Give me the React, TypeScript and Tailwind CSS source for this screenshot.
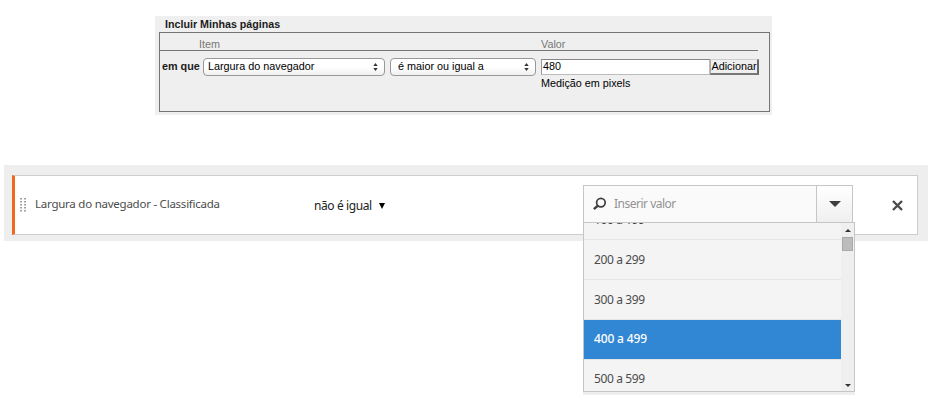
import React from "react";

const options = ["100 a 199", "200 a 299", "300 a 399", "400 a 499", "500 a 599"];

const optionBase = "h-[40px] border-b border-[#e4e4e4] pl-[10px] text-[12px]";

function optionClass(option: string, index: number) {
  if (option === "400 a 499") {
    return `${optionBase} bg-[#3187d3] leading-[38px] font-medium tracking-[-0.15px] text-white`;
  }
  if (index === 0) {
    return `${optionBase} leading-[40px] tracking-[-0.37px] text-[#444]`;
  }
  if (index === options.length - 1) {
    return `${optionBase} leading-[38px] tracking-[-0.37px] text-[#4c4c4c]`;
  }
  return `${optionBase} leading-[39px] tracking-[-0.37px] text-[#4c4c4c]`;
}

function Stepper() {
  return (
    <svg width="5" height="8" viewBox="0 0 5 8" className="fill-[#333]">
      <path d="M2.5 0 4.7 3H.3zM2.5 8 .3 5h4.4z" />
    </svg>
  );
}

function NativeSelect({ label, className }: { label: string; className: string }) {
  return (
    <div
      className={`flex h-[18px] shrink-0 items-center justify-between rounded-[4px] border border-[#989898] bg-linear-to-b from-white from-50% to-[#f0f0f0] pr-[6px] text-black ${className}`}
    >
      <span className="pb-[2px] text-[10.8px] leading-[14px] whitespace-nowrap">{label}</span>
      <Stepper />
    </div>
  );
}

function SegmentPanel() {
  return (
    <section className="ml-[155px] h-[99px] w-[617px] bg-[#efefef] px-[4px] pt-px font-['Liberation_Sans',Arial,sans-serif] text-[11px] text-black">
      <h2 className="h-[15px] pl-[6px] text-[10.7px] leading-[15px] font-bold text-[#1c1c1c]">Incluir Minhas páginas</h2>
      <div className="h-[80px] w-[611px] border border-[#757575]">
        <div className="flex h-[18px] w-[598px] border-b border-[#757575] pt-[4px] text-[10.8px] leading-[14px] text-[#777]">
          <span className="w-[342px] pl-[39px]">Item</span>
          <span className="pl-[39px]">Valor</span>
        </div>
        <div className="flex items-start pt-[7px] pl-[2px]">
          <span className="w-[41px] shrink-0 text-[10.8px] leading-[17px] font-bold whitespace-nowrap text-[#1c1c1c]">em que</span>
          <NativeSelect label="Largura do navegador" className="w-[182px] pl-[4px]" />
          <NativeSelect label="é maior ou igual a" className="ml-[5px] w-[146px] pl-[7px]" />
          <div className="ml-[5px]">
            <div className="mt-px flex">
              <div className="h-[16px] w-[169px] border border-t-[#858585] border-r-[#bbb] border-b-[#bbb] border-l-[#999] bg-white pl-px text-[10.8px] leading-[13px]">480</div>
              <div className="h-[16px] w-[49px] border-t border-r-2 border-b-2 border-l border-t-[#ccc] border-r-[#6a6a6a] border-b-[#777] border-l-[#aaa] text-center text-[10.8px] leading-[13px]">Adicionar</div>
            </div>
            <p className="pt-px text-[10.8px] leading-[14px]">Medição em pixels</p>
          </div>
        </div>
      </div>
    </section>
  );
}

function DragHandle() {
  return (
    <svg width="6" height="14" viewBox="0 0 6 14" className="fill-[#a0a0a0]">
      {[0, 3, 6, 9, 12].map((y) => (
        <path key={y} d={`M0 ${y}h2v1.5h-2zM4 ${y}h2v1.5h-2z`} />
      ))}
    </svg>
  );
}

function OptionsMenu() {
  return (
    <div className="absolute top-[37px] left-0 flex h-[170px] w-[272px] border border-[#c6c6c6] bg-[#f4f4f4] shadow-[0_3px_0_#eee]">
      <div className="h-full w-[257px] overflow-hidden">
        <div className="-mt-[23px]">
          {options.map((option, index) => (
            <div key={option} className={optionClass(option, index)}>
              {option}
            </div>
          ))}
        </div>
      </div>
      <div className="flex w-[13px] flex-col items-center bg-[#efefef] pt-[6px] pb-[4px]">
        <svg width="6" height="3" viewBox="0 0 6 3" className="fill-[#333]"><path d="M3 0 6 3H0z" /></svg>
        <div className="mt-[5px] h-[14px] w-[11px] border border-[#aaa] bg-[#bcbcbc]" />
        <svg width="6" height="3" viewBox="0 0 6 3" className="mt-auto fill-[#333]"><path d="M0 0h6L3 3z" /></svg>
      </div>
    </div>
  );
}

function ValueCombo() {
  return (
    <div className="relative h-[38px] w-[270px]">
      <div className="flex h-full border border-[#c6c6c6] bg-[#fafafa]">
        <div className="flex h-[36px] w-[233px] items-center border-r border-[#c6c6c6] pl-[9px]">
          <svg width="14" height="14" viewBox="0 0 14 14" fill="none" stroke="#3e3e3e">
            <circle cx="7.9" cy="5.6" r="4.3" strokeWidth="1.7" />
            <path d="m4.9 8.6-4 3.6" strokeWidth="2.4" />
          </svg>
          <span className="pl-[7px] text-[12px] tracking-[-0.5px] text-[#929292]">Inserir valor</span>
        </div>
        <div className="flex flex-1 items-center justify-center bg-linear-to-b from-white to-[#efefef]">
          <svg width="12" height="6" viewBox="0 0 12 6" className="fill-[#3e3e3e]"><path d="M0 0h12L6 6z" /></svg>
        </div>
      </div>
      <OptionsMenu />
    </div>
  );
}

function RulePanel() {
  return (
    <section className="mt-[50px] ml-[4px] h-[76px] w-[924px] bg-[#eee] px-[8px] pt-[10px] font-['Noto_Sans',sans-serif] text-[12px]">
      <div className="flex h-[60px] w-[906px] border border-l-[3px] border-[#cdcdcd] border-l-[#ef6a20] bg-white">
        <div className="mt-[22px] ml-[5px]"><DragHandle /></div>
        <span className="mt-[19px] ml-[9px] w-[279px] text-[11.5px] leading-[18px] tracking-[-0.24px] whitespace-nowrap text-[#4c4c4c]">Largura do navegador - Classificada</span>
        <div className="mt-[21px] flex w-[269px] items-center self-start text-[12px] leading-[18px] tracking-[-0.4px] text-[#222]">
          <span>não é igual</span>
          <svg width="6" height="6" viewBox="0 0 6 6" className="ml-[7px] fill-black"><path d="M0 0h6L3 6z" /></svg>
        </div>
        <div className="mt-[9px]"><ValueCombo /></div>
        <svg width="11" height="11" viewBox="0 0 11 11" className="mt-[24px] ml-[39px]" stroke="#4b4b4b" strokeWidth="2.4">
          <path d="m1 1 9 9M10 1 1 10" />
        </svg>
      </div>
    </section>
  );
}

export default function App() {
  return (
    <main className="h-[403px] w-[932px] overflow-hidden bg-white pt-[16px]">
      <SegmentPanel />
      <RulePanel />
    </main>
  );
}
